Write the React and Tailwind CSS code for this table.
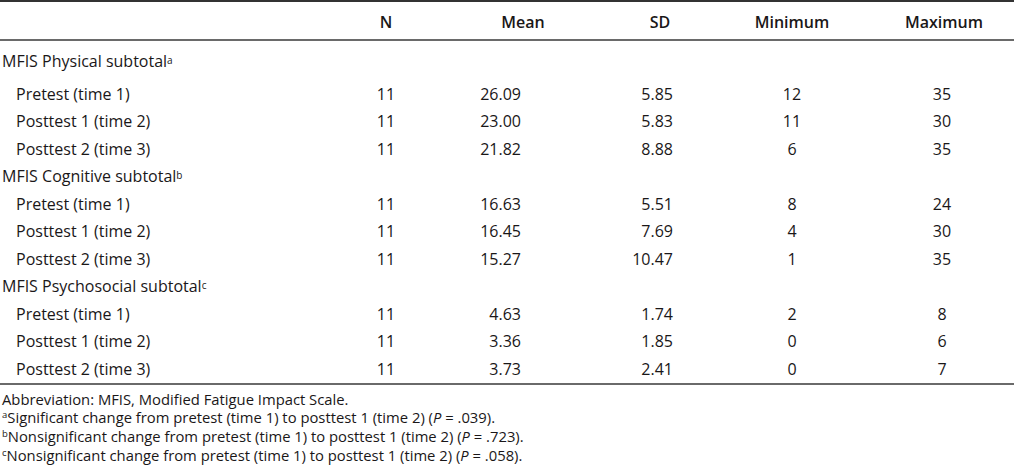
import React from "react";

const groups = [
  {
    title: "MFIS Physical subtotal",
    note: "a",
    rows: [
      ["Pretest (time 1)", "11", "26.09", "5.85", "12", "35"],
      ["Posttest 1 (time 2)", "11", "23.00", "5.83", "11", "30"],
      ["Posttest 2 (time 3)", "11", "21.82", "8.88", "6", "35"],
    ],
  },
  {
    title: "MFIS Cognitive subtotal",
    note: "b",
    rows: [
      ["Pretest (time 1)", "11", "16.63", "5.51", "8", "24"],
      ["Posttest 1 (time 2)", "11", "16.45", "7.69", "4", "30"],
      ["Posttest 2 (time 3)", "11", "15.27", "10.47", "1", "35"],
    ],
  },
  {
    title: "MFIS Psychosocial subtotal",
    note: "c",
    rows: [
      ["Pretest (time 1)", "11", "4.63", "1.74", "2", "8"],
      ["Posttest 1 (time 2)", "11", "3.36", "1.85", "0", "6"],
      ["Posttest 2 (time 3)", "11", "3.73", "2.41", "0", "7"],
    ],
  },
];

const footnotes = [
  ["a", "Significant change from pretest (time 1) to posttest 1 (time 2) (", ".039)."],
  ["b", "Nonsignificant change from pretest (time 1) to posttest 1 (time 2) (", ".723)."],
  ["c", "Nonsignificant change from pretest (time 1) to posttest 1 (time 2) (", ".058)."],
];

function DataRow({ row }) {
  const [label, n, mean, sd, min, max] = row;
  return (
    <div className="flex h-[27.5px] items-center">
      <div className="w-[336px] pl-[16px]">{label}</div>
      <div className="w-[100px] text-center">{n}</div>
      <div className="w-[85px] text-right">{mean}</div>
      <div className="w-[152px] text-right">{sd}</div>
      <div className="w-[238px] text-center">{min}</div>
      <div className="w-[62px] text-center">{max}</div>
    </div>
  );
}

export default function App() {
  return (
    <div
      className="w-[1014px] h-[474px] bg-white text-[#1a1718] text-[16px] overflow-hidden"
      style={{ fontFamily: '"Open Sans", "Noto Sans", sans-serif' }}
    >
      <div className="h-[2px] bg-[#333]" />
      <div className="flex h-[37px] items-center pt-[3px] font-semibold">
        <div className="w-[336px]" />
        <div className="w-[100px] text-center">N</div>
        <div className="w-[174px] text-center">Mean</div>
        <div className="w-[100px] text-center">SD</div>
        <div className="w-[164px] text-center">Minimum</div>
        <div className="w-[140px] text-center">Maximum</div>
      </div>
      <div className="h-[2px] bg-[#6a6a6a]" />
      {groups.map((g, gi) => (
        <div key={g.title}>
          <div
            className={
              gi === 0
                ? "flex h-[39px] items-center pl-[2px]"
                : "flex h-[27.5px] items-center pl-[2px]"
            }
          >
            <span>{g.title}</span>
            <sup className="text-[10px] relative top-[-1px]">{g.note}</sup>
          </div>
          {g.rows.map((r) => (
            <DataRow key={r[0]} row={r} />
          ))}
        </div>
      ))}
      <div className="h-[2px] bg-[#6a6a6a]" />
      <div className="pt-[5px] pl-[2px] text-[14.8px] leading-[18.7px]">
        <div>Abbreviation: MFIS, Modified Fatigue Impact Scale.</div>
        {footnotes.map(([k, text, p]) => (
          <div key={k}>
            <sup className="text-[9.5px]">{k}</sup>
            {text}
            <i>P</i> = {p}
          </div>
        ))}
      </div>
    </div>
  );
}
